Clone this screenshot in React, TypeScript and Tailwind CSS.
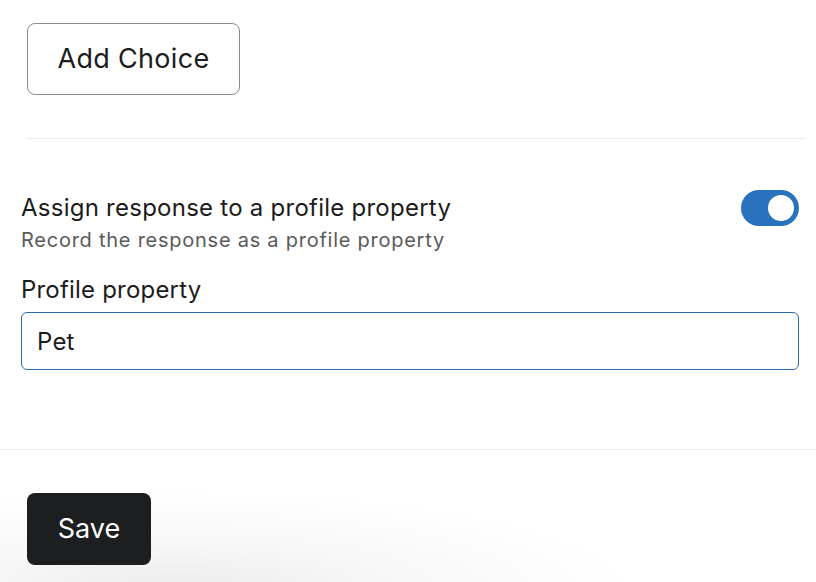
import { useState } from "react";

export default function App() {
  const [enabled, setEnabled] = useState(true);
  const [property, setProperty] = useState("Pet");

  return (
    <div
      className="relative h-[582px] w-full overflow-hidden bg-white text-[#1c1c1c]"
      style={{ fontFamily: "Inter, 'Noto Sans', sans-serif" }}
    >
      <div className="pt-[23px] pl-[27px]">
        <button className="flex h-[72px] w-[213px] items-center justify-center rounded-[8px] border border-[#8c8c8c] bg-white pt-[1px] text-[27px] tracking-[0.3px]">
          Add Choice
        </button>
      </div>

      <div className="mt-[43px] ml-[27px] mr-[11px] border-t border-[#ececec]" />

      <div className="pl-[21px] pr-[17px] pt-[54px]">
        <div className="flex items-start justify-between">
          <div>
            <p className="text-[24px] leading-[30px] tracking-[0.25px]">
              Assign response to a profile property
            </p>
            <p className="mt-[4px] text-[20px] leading-[26px] tracking-[0.75px] text-[#5a5a5a]">
              Record the response as a profile property
            </p>
          </div>
          <button
            onClick={() => setEnabled(!enabled)}
            className={`-mt-[3px] flex h-[36px] w-[58px] items-center rounded-full px-[5px] ${
              enabled ? "justify-end bg-[#2a72bd]" : "justify-start bg-gray-300"
            }`}
          >
            <span className="h-[26px] w-[26px] rounded-full bg-white" />
          </button>
        </div>

        <label className="mt-[22px] block text-[24px] leading-[30px] tracking-[0.2px]">
          Profile property
        </label>
        <input
          value={property}
          onChange={(e) => setProperty(e.target.value)}
          className="mt-[7px] block h-[58px] w-full rounded-[6px] border border-[#2b6cb0] px-[15px] pt-[1px] text-[24px] tracking-[0.2px] outline-none"
        />
      </div>

      <div className="mt-[79px] border-t border-[#ececec]" />

      <div className="relative pt-[43px] pl-[27px]">
        <div className="pointer-events-none absolute left-0 top-0 h-[139px] w-full bg-[radial-gradient(ellipse_55%_70%_at_22%_100%,#ececec_0%,#f7f7f7_45%,transparent_100%)]" />
        <button className="relative flex h-[72px] w-[124px] items-center justify-center rounded-[8px] bg-[#1d1e20] pt-[1px] text-[27px] text-white">
          Save
        </button>
      </div>
    </div>
  );
}
